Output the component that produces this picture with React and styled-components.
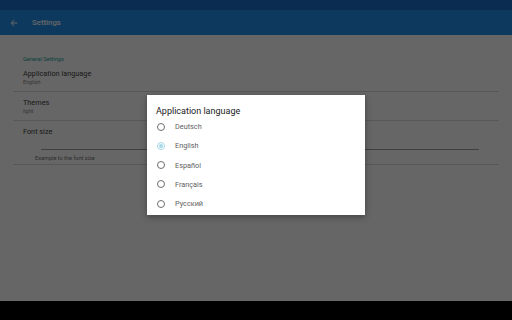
import React from "react";
import styled, { createGlobalStyle } from "styled-components";

const Global = createGlobalStyle`
  html, body { margin: 0; padding: 0; background: #000; }
  body { font-family: Roboto, "Noto Sans", Arial, sans-serif; }
  #root { width: 512px; height: 320px; overflow: hidden; }
`;

const Screen = styled.div`
  position: relative;
  width: 512px;
  height: 320px;
  display: flex;
  flex-direction: column;
  background: #fff;
`;

const StatusBar = styled.div`
  height: 10px;
  background: #1a6fc7;
  flex: none;
`;

const AppBar = styled.div`
  height: 25px;
  flex: none;
  background: #2190ec;
  display: flex;
  align-items: center;
  padding-left: 9px;
  gap: 13px;
  color: #fff;
`;

const Title = styled.div`
  font-size: 7.8px;
  font-weight: 500;
  color: #fff;
`;

const Content = styled.div`
  flex: 1;
  background: #fff;
  padding-top: 20px;
`;

const SectionHeader = styled.div`
  font-size: 5.6px;
  color: #26a69a;
  padding-left: 23px;
  height: 8px;
  line-height: 8px;
`;

const Pref = styled.div`
  margin: 0 13px;
  padding: 6px 0 0 10px;
  height: ${p => p.$h}px;
  box-sizing: border-box;
  border-bottom: 1px solid #dcdcdc;
`;

const PrefTitle = styled.div`
  font-size: 7.3px;
  color: #424242;
  line-height: 10px;
`;

const PrefSummary = styled.div`
  font-size: 5.4px;
  color: #8a8a8a;
  line-height: 7px;
`;

const Track = styled.div`
  height: 1px;
  background: #9e9e9e;
  margin: 12px 20px 0 18px;
`;

const Example = styled.div`
  font-size: 5.6px;
  color: #757575;
  padding-left: 12px;
  margin-top: 5px;
`;

const NavBar = styled.div`
  height: 19px;
  flex: none;
  background: #000;
`;

const Scrim = styled.div`
  position: absolute;
  left: 0;
  top: 0;
  right: 0;
  bottom: 19px;
  background: rgba(0, 0, 0, 0.6);
`;

const Dialog = styled.div`
  position: absolute;
  left: 147px;
  top: 95px;
  width: 218px;
  height: 120px;
  background: #fff;
  box-shadow: 0 2px 6px rgba(0, 0, 0, 0.35);
  box-sizing: border-box;
  padding: 10px 0 0 0;
  display: flex;
  flex-direction: column;
`;

const DialogTitle = styled.div`
  font-size: 9px;
  color: #212121;
  height: 12px;
  line-height: 12px;
  padding-left: 9px;
`;

const Option = styled.div`
  height: 19.25px;
  display: flex;
  align-items: center;
  padding-left: 10px;
`;

const Radio = styled.span`
  width: 8px;
  height: 8px;
  border-radius: 50%;
  box-sizing: border-box;
  border: 1px solid ${p => (p.$checked ? "#a6d9e6" : "#6f6f6f")};
  display: flex;
  align-items: center;
  justify-content: center;
  flex: none;
  &::after {
    content: "";
    width: 4px;
    height: 4px;
    border-radius: 50%;
    background: ${p => (p.$checked ? "#a6d9e6" : "transparent")};
  }
`;

const OptionLabel = styled.span`
  font-size: 7.3px;
  color: #616161;
  margin-left: 10px;
`;

const languages = ["Deutsch", "English", "Español", "Français", "Русский"];

export default function App() {
  return (
    <Screen>
      <Global />
      <StatusBar />
      <AppBar>
        <svg width="10" height="10" viewBox="0 0 24 24">
          <path d="M20 11H7.83l5.59-5.59L12 4l-8 8 8 8 1.41-1.41L7.83 13H20v-2z" fill="#fff" />
        </svg>
        <Title>Settings</Title>
      </AppBar>
      <Content>
        <SectionHeader>General Settings</SectionHeader>
        <Pref $h={29}>
          <PrefTitle>Application language</PrefTitle>
          <PrefSummary>English</PrefSummary>
        </Pref>
        <Pref $h={29}>
          <PrefTitle>Themes</PrefTitle>
          <PrefSummary>light</PrefSummary>
        </Pref>
        <Pref $h={44}>
          <PrefTitle>Font size</PrefTitle>
          <Track />
          <Example>Example to the font size</Example>
        </Pref>
      </Content>
      <NavBar />
      <Scrim />
      <Dialog>
        <DialogTitle>Application language</DialogTitle>
        {languages.map(l => (
          <Option key={l}>
            <Radio $checked={l === "English"} />
            <OptionLabel>{l}</OptionLabel>
          </Option>
        ))}
      </Dialog>
    </Screen>
  );
}
